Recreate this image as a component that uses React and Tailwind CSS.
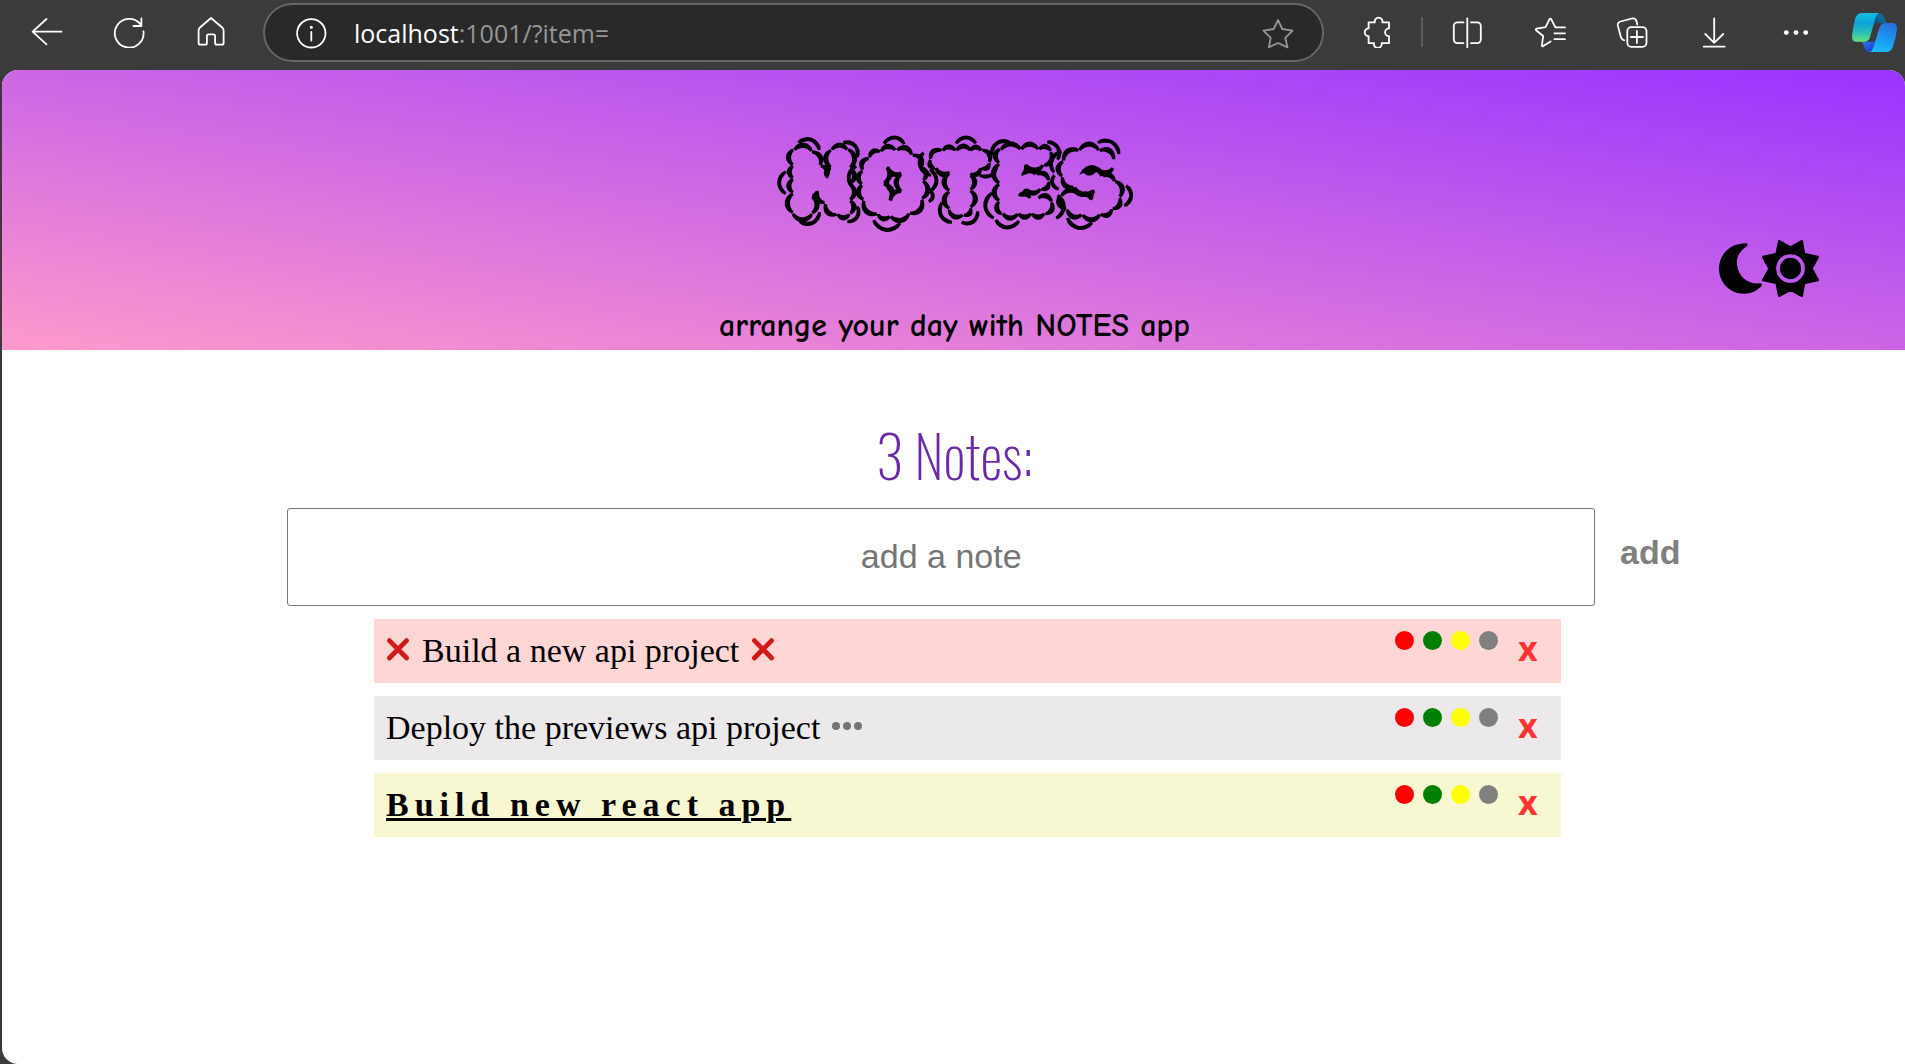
import React from "react";

function ToolIcon({ cx, children, label, className = "w-[82px] justify-center" }) {
  return (
    <button type="button" aria-label={label} className={`flex h-[60px] shrink-0 items-center ${className}`}>
      <svg
        width="32"
        height="32"
        viewBox={`${cx - 16} 16 32 32`}
        fill="none"
        stroke="#ffffff"
        strokeWidth="1.8"
        strokeLinecap="round"
        strokeLinejoin="round"
        aria-hidden="true"
      >
        {children}
      </svg>
    </button>
  );
}

function CopilotIcon() {
  return (
    <svg width="47" height="41" viewBox="243 36 141 123" aria-hidden="true">
      <defs>
        <linearGradient id="cpLeft" x1="0" y1="0" x2="0" y2="1">
          <stop offset="0" stopColor="#16bfe0" />
          <stop offset="0.35" stopColor="#0aa3d8" />
          <stop offset="0.7" stopColor="#2cc0b4" />
          <stop offset="1" stopColor="#6be07f" />
        </linearGradient>
        <linearGradient id="cpRight" x1="0.6" y1="0" x2="0.3" y2="1">
          <stop offset="0" stopColor="#2b6fdc" />
          <stop offset="0.55" stopColor="#1b9bf5" />
          <stop offset="1" stopColor="#1cbcf8" />
        </linearGradient>
        <linearGradient id="cpTop" x1="1" y1="0" x2="0" y2="1">
          <stop offset="0" stopColor="#0b7fae" />
          <stop offset="1" stopColor="#0a4f78" />
        </linearGradient>
        <linearGradient id="cpBottom" x1="0" y1="0" x2="1" y2="1">
          <stop offset="0" stopColor="#2a7ff0" />
          <stop offset="1" stopColor="#1a30c8" />
        </linearGradient>
      </defs>
      <path d="M318 39 H326 Q340 40 345 58 Q347 67 352 69 H330 Q318 69 312 72 Z" fill="url(#cpTop)" />
      <path d="M272 125 H318 L306 156 H298 Q286 155 282 140 Q279 127 272 125 Z" fill="url(#cpBottom)" />
      <path d="M274 39 H328 Q320 41 316 55 L300 112 Q296 125 284 125 H258 Q245 125 246 108 Q249 80 256 54 Q261 40 274 39 Z" fill="url(#cpLeft)" />
      <path d="M346 69 H368 Q382 70 381 88 Q377 118 368 142 Q363 156 350 156 H298 Q306 154 311 140 L328 84 Q332 70 346 69 Z" fill="url(#cpRight)" />
    </svg>
  );
}

function Toolbar() {
  return (
    <nav aria-label="Browser toolbar" className="flex h-[70px] items-start pt-[2px] pl-[6px]">
      <ToolIcon cx={47} label="Back">
        <path d="M61.5 31.7 H32.8 M46.5 19 L32.6 31.7 L46.5 44.3" />
      </ToolIcon>
      <ToolIcon cx={129} label="Refresh">
        <path d="M143.5 31.5 A14.4 14.4 0 1 1 140.6 24.4 M141.4 18.3 V26 H133.5" />
      </ToolIcon>
      <ToolIcon cx={211} label="Home">
        <path d="M211 18 L222.2 27.5 Q223.6 28.7 223.6 30.4 V43 Q223.6 44.7 222 44.7 H216.8 Q215.1 44.7 215.1 43 V36.3 Q215.1 34.4 213.4 34.4 H208.6 Q206.9 34.4 206.9 36.3 V43 Q206.9 44.7 205.2 44.7 H200.2 Q198.6 44.7 198.6 43 V30.4 Q198.6 28.7 200 27.5 Z" />
      </ToolIcon>
      <div className="ml-[11px] mt-px flex h-[59px] min-w-0 flex-1 items-center rounded-full border-2 border-[#666666] bg-[#292929] pr-7 pl-[30px]">
        <svg width="32" height="32" viewBox="295 16 32 32" fill="none" stroke="#ffffff" strokeWidth="1.8" strokeLinecap="round" className="shrink-0" aria-hidden="true">
          <circle cx="311.3" cy="32.3" r="14.2" />
          <path d="M311.3 31 V39.5" />
          <circle cx="311.3" cy="26.3" r="0.7" fill="#ffffff" />
        </svg>
        <div className="ml-[27px] flex-1 font-['Segoe_UI','Open_Sans',sans-serif] text-[25px] leading-8 text-[#969696]">
          <span className="text-white">localhost</span>:1001/?item=
        </div>
        <button type="button" aria-label="Add to favorites" className="shrink-0">
          <svg width="32" height="32" viewBox="1262 16 32 32" fill="none" stroke="#969696" strokeWidth="1.8" strokeLinejoin="round" aria-hidden="true">
            <path d="M1278 19 L1282.3 28 L1292.6 29.6 L1285.3 36.8 L1287.5 46.4 L1278 42 L1268.8 46.4 L1270.7 36.8 L1263.4 29.6 L1273.7 28 Z" />
          </svg>
        </button>
      </div>
      <ToolIcon cx={1377} label="Extensions" className="ml-[11px] w-[82px] justify-center">
        <path d="M1369.6 22.4 H1375.8 a3.9 3.9 0 1 1 7.6 0 H1390 V28.4 a3.9 3.9 0 1 0 0 7.8 V43.2 H1382.6 a3.9 3.9 0 1 1 -7.6 0 H1369.6 V36.2 a3.9 3.9 0 1 1 0 -7.8 Z" />
      </ToolIcon>
      <div className="mx-1 mt-[15px] h-[30px] w-[2px] shrink-0 bg-[#5c5c5c]" />
      <ToolIcon cx={1468} label="Split screen">
        <path d="M1463.5 22.4 H1457.3 a3.5 3.5 0 0 0 -3.5 3.5 V39.6 a3.5 3.5 0 0 0 3.5 3.5 H1463.5 M1471 22.4 H1477.3 a3.5 3.5 0 0 1 3.5 3.5 V39.6 a3.5 3.5 0 0 1 -3.5 3.5 H1471 M1467.3 18.5 V47.2" />
      </ToolIcon>
      <ToolIcon cx={1550} label="Favorites">
        <path d="M1565 27.4 H1555.4 L1551.2 19.2 Q1550.3 18 1549.5 19.2 L1545.6 27.2 L1536.6 28.7 Q1535.3 29.2 1536 30.2 L1543.2 36 L1541.9 45.4 Q1542 46.7 1543.2 46.1 L1550.6 41.4 M1554.4 33.3 H1565 M1554.4 39.2 H1565" />
      </ToolIcon>
      <ToolIcon cx={1632} label="Collections">
        <path d="M1637.3 24.5 L1636.5 21.2 Q1635.5 17.8 1632.3 18.4 L1620.6 21.5 Q1617.1 22.6 1617.9 26 L1621 37.4 Q1622 40 1624.3 40.4" />
        <rect x="1627.3" y="27.2" width="19.2" height="19.6" rx="4" />
        <path d="M1636.9 31 V43 M1630.9 37 H1642.9" />
      </ToolIcon>
      <ToolIcon cx={1714} label="Downloads">
        <path d="M1714.2 18.3 V42.8 M1705.3 34 L1714.2 42.8 L1723.2 34 M1703.6 46.6 H1724.8" />
      </ToolIcon>
      <ToolIcon cx={1796} label="Settings and more">
        <g fill="#ffffff" stroke="none">
          <circle cx="1786.3" cy="32.6" r="2.4" />
          <circle cx="1796" cy="32.6" r="2.4" />
          <circle cx="1805.7" cy="32.6" r="2.4" />
        </g>
      </ToolIcon>
      <button type="button" aria-label="Copilot" className="flex h-[60px] w-[68px] shrink-0 items-center justify-end pr-[7px]">
        <CopilotIcon />
      </button>
    </nav>
  );
}

function ThemeSwitch() {
  return (
    <div className="flex h-[57px] items-center self-end pr-[86px]">
      <button type="button" aria-label="Dark mode">
        <svg width="43" height="57" viewBox="87 60 129 171" aria-hidden="true">
          <path d="M168 70 Q175 71 172 77 C150 92 138 110 141 134 C145 168 172 193 210 190 Q217 190 215 197 C202 212 184 221 162 221 C120 221 87 188 87 146 C87 106 117 70 168 70 Z" />
        </svg>
      </button>
      <button type="button" aria-label="Light mode">
        <svg width="57" height="57" viewBox="216 60 171 171" aria-hidden="true">
          <path
            d="M268 64 L301.5 83 L335 64 L342 102 L383 111 L364 146 L383 180 L342 189 L335 227 L301.5 209 L268 227 L260 189 L220 180 L239 146 L220 111 L260 102 Z"
            stroke="#000000"
            strokeWidth="8"
            strokeLinejoin="round"
          />
          <circle cx="301.5" cy="145.5" r="37.5" fill="none" stroke="#bd57ee" strokeWidth="11" />
        </svg>
      </button>
    </div>
  );
}

const tones = {
  red: "bg-[#ffd6d6]",
  gray: "bg-[#ebe9ea]",
  yellow: "bg-[#f7f7d2]",
};

const notes = [
  { text: "Build a new api project", tone: "red" },
  { text: "Deploy the previews api project", tone: "gray" },
  { text: "Build new react app", tone: "yellow" },
];

const dots = [
  ["Not done", "bg-[#ff0000]"],
  ["Done", "bg-[#008000]"],
  ["Important", "bg-[#ffff00]"],
  ["In progress", "bg-[#808080]"],
];

function Cross() {
  return (
    <svg width="24" height="28" viewBox="0 0 24 28" fill="none" stroke="#d31a1a" strokeWidth="4.8" strokeLinecap="round" className="shrink-0" aria-hidden="true">
      <path d="M3.4 3.6 L20.6 21 M20.6 3.6 L3.4 21" />
    </svg>
  );
}

function Note({ text, tone }) {
  return (
    <li className={`flex h-16 items-start pr-[23px] pl-3 ${tones[tone]}`}>
      <div className="flex flex-1 items-center pt-3 font-['Liberation_Serif',serif] text-[34px] leading-10 text-black">
        {tone === "red" && <><Cross /><span className="px-3">{text}</span><Cross /></>}
        {tone === "gray" && (
          <>
            <span>{text}</span>
            <svg width="30" height="12" viewBox="0 0 30 12" fill="#757575" className="ml-3" aria-hidden="true">
              <circle cx="4" cy="4" r="4" />
              <circle cx="15" cy="4" r="4" />
              <circle cx="26" cy="4" r="4" />
            </svg>
          </>
        )}
        {tone === "yellow" && <span className="font-bold tracking-[6px] underline decoration-[3px]">{text}</span>}
      </div>
      <div className="mt-3 flex gap-[9px]">
        {dots.map(([label, color]) => (
          <button key={label} type="button" aria-label={label} className={`size-[19px] rounded-full ${color}`} />
        ))}
      </div>
      <button type="button" aria-label="Delete note" className="ml-5 pt-[9px] font-['Open_Sans',sans-serif] text-[34px] leading-10 font-bold text-[#ff3333]">
        x
      </button>
    </li>
  );
}

export default function App() {
  return (
    <div className="flex min-h-screen flex-col bg-[#3b3b3b]">
      <Toolbar />
      <div className="ml-[2px] flex-1 overflow-hidden rounded-t-2xl rounded-bl-2xl bg-white">
        <header className="flex flex-col items-center bg-[linear-gradient(to_top_right,#ff99cc,#9933ff)] pt-[61px]">
          <h1 className="pl-0.5 font-['Rubik_Puddles','Inter',sans-serif] text-[96px] leading-[104px] font-bold text-black">NOTES</h1>
          <div className="mt-[5px] flex w-full flex-col">
            <ThemeSwitch />
          </div>
          <p className="pt-2 pb-1 pl-0.5 font-['Comic_Sans_MS','Comic_Neue',cursive] text-[32px] leading-[41px] font-bold text-black">
            arrange your day with NOTES app
          </p>
        </header>
        <main>
          <h2 className="pt-[57px] pb-[7px] pl-0.5 text-center font-['Oswald',sans-serif] text-[57px] leading-[94px] font-extralight text-[#6a2aa8]">
            3 Notes:
          </h2>
          <form className="flex items-start pr-[11.8%] pl-[15%] font-['Liberation_Sans',sans-serif] text-[34px]" onSubmit={(e) => e.preventDefault()}>
            <input
              type="text"
              name="item"
              aria-label="Note"
              placeholder="add a note"
              className="h-[98px] min-w-0 flex-1 rounded-[3px] border border-[#767676] bg-white pb-0.5 text-center placeholder:text-[#757575]"
            />
            <button type="submit" className="ml-[25px] h-[88px] font-bold text-[#808080]">
              add
            </button>
          </form>
          <ul className="mt-[13px] mr-[18.1%] ml-[19.55%] flex flex-col gap-[13px]">
            {notes.map((n) => (
              <Note key={n.text} {...n} />
            ))}
          </ul>
        </main>
      </div>
    </div>
  );
}
